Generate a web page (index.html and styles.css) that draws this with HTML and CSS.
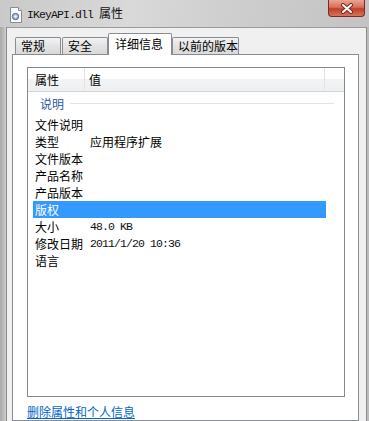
FILE: index.html
```html
<!DOCTYPE HTML>
<html>
<head>
    <meta charset="utf-8">
    <title>IKeyAPI.dll 属性</title>
    <link rel="stylesheet" href="styles.css">
</head>

<body>
    <div class='window'>
        <div class='titlebar'>
            <svg class='file-icon' width="14" height="16" viewBox="0 0 14 16">
                <path d="M1.5 0.5h8l3 3v12h-11z" fill="#fdfdfd" stroke="#8c8c8c"/>
                <path d="M9.5 0.5v3h3" fill="#e6e6e6" stroke="#8c8c8c"/>
                <circle cx="6.5" cy="9.5" r="3.2" fill="#9db4cf" stroke="#56708f"/>
                <circle cx="6.5" cy="9.5" r="1.2" fill="#fdfdfd"/>
            </svg>
            <span class='title'>IKeyAPI.dll <span class='cjk'>属性</span></span>
            <div class='close'>
                <svg width="14" height="11" viewBox="0 0 14 11">
                    <path d="M3 2l8 7M11 2l-8 7" stroke="#7a2a1e" stroke-width="4" stroke-linecap="round"/>
                    <path d="M3 2l8 7M11 2l-8 7" stroke="#ffffff" stroke-width="2" stroke-linecap="round"/>
                </svg>
            </div>
        </div>
        <div class='client'>
            <div class='tabs'>
                <div class='tab'>常规</div>
                <div class='tab'>安全</div>
                <div class='tab active'>详细信息</div>
                <div class='tab'>以前的版本</div>
            </div>
            <div class='panel'>
                <div class='list'>
                    <div class='list-head'>
                        <div class='col-name'>属性</div>
                        <div class='col-value'>值</div>
                        <div class='col-rest'></div>
                    </div>
                    <div class='group'>
                        <span>说明</span>
                        <i class='rule'></i>
                    </div>
                    <div class='row'><span class='name'>文件说明</span><span class='value'></span></div>
                    <div class='row'><span class='name'>类型</span><span class='value'>应用程序扩展</span></div>
                    <div class='row'><span class='name'>文件版本</span><span class='value'></span></div>
                    <div class='row'><span class='name'>产品名称</span><span class='value'></span></div>
                    <div class='row'><span class='name'>产品版本</span><span class='value'></span></div>
                    <div class='row selected'><span class='name'>版权</span><span class='value'></span></div>
                    <div class='row'><span class='name'>大小</span><span class='value mono'>48.0 KB</span></div>
                    <div class='row'><span class='name'>修改日期</span><span class='value mono'>2011/1/20 10:36</span></div>
                    <div class='row'><span class='name'>语言</span><span class='value'></span></div>
                </div>
                <a class='link' href="#">删除属性和个人信息</a>
            </div>
        </div>
    </div>
</body>
</html>
```

FILE: styles.css
```css
html, body{
    margin: 0;
    padding: 0;
    width: 369px;
    height: 421px;
    overflow: hidden;
}
body{
    font-family: "Noto Sans CJK SC", "Liberation Sans", sans-serif;
    font-size: 12px;
    color: #000;
}
.window{
    width: 369px;
    height: 421px;
    display: flex;
    flex-direction: column;
    background: linear-gradient(to right, #a9a9a9 0px, #bdbdbd 4px, #d2d2d2 6px, #c8c8c8 50%, #bcbcbc);
}
.titlebar{
    height: 27px;
    display: flex;
    align-items: flex-start;
    background: linear-gradient(100deg, #c9c9c9 0%, #d9d9d9 35%, #cfcfcf 60%, #c3c3c3 100%);
}
.file-icon{
    margin: 7px 0 0 9px;
}
.title{
    margin: 6px 0 0 4px;
    font-family: "Liberation Mono", monospace;
    font-size: 11.5px;
    letter-spacing: -0.9px;
    line-height: 14px;
    color: #111;
}
.title .cjk{
    font-family: "Noto Sans CJK SC", sans-serif;
    font-size: 12px;
    letter-spacing: 0;
}
.close{
    margin-left: auto;
    margin-right: 4px;
    width: 37px;
    height: 17px;
    box-sizing: border-box;
    border: 1px solid #7d2a20;
    border-top: none;
    border-radius: 0 0 4px 4px;
    background: linear-gradient(#e8a593 0%, #d8705a 45%, #c23e27 55%, #d5735d 100%);
    display: flex;
    align-items: center;
    justify-content: center;
}
.client{
    flex: 1;
    margin: 0 2px 0 6px;
    border-left: 1px solid #8a8a8a;
    border-top: 1px solid #9a9a9a;
    border-right: 1px solid #8a8a8a;
    background-color: #f0f0f0;
    padding: 0 7px 0 5px;
    display: flex;
    flex-direction: column;
}
.tabs{
    display: flex;
    align-items: flex-end;
    height: 21px;
    padding: 5px 0 0 3px;
}
.tab{
    height: 17px;
    box-sizing: border-box;
    min-width: 46px;
    padding: 0 0 0 5px;
    margin-right: 1px;
    border: 1px solid #898c95;
    border-bottom: none;
    border-radius: 2px 2px 0 0;
    background: linear-gradient(#f3f3f3, #e3e3e3 50%, #d9d9d9);
    line-height: 16px;
    white-space: nowrap;
}
.tab.active{
    height: 22px;
    margin: 0 0 -1px -1px;
    padding: 0 8px 0 6px;
    background: #ffffff;
    position: relative;
    line-height: 20px;
}
.panel{
    flex: 1;
    border: 1px solid #898c95;
    background-color: #ffffff;
    padding: 12px 13px 0 14px;
}
.list{
    height: 330px;
    box-sizing: border-box;
    border: 1px solid #828790;
}
.list-head{
    display: flex;
    height: 24px;
    box-sizing: border-box;
    border-bottom: 1px solid #d5d5d5;
    background: linear-gradient(#ffffff 0%, #ffffff 45%, #f2f3f5 50%, #eef0f2 100%);
    line-height: 23px;
}
.col-name{
    width: 57px;
    box-sizing: border-box;
    padding-left: 7px;
    border-right: 1px solid #e3e4e6;
}
.col-value{
    width: 240px;
    box-sizing: border-box;
    padding-left: 4px;
    border-right: 1px solid #e3e4e6;
}
.col-rest{
    flex: 1;
}
.group{
    display: flex;
    align-items: center;
    height: 17px;
    margin: 3px 0 4px 0;
    padding-left: 12px;
    color: #2a55a8;
}
.group .rule{
    flex: 1;
    height: 1px;
    margin: 0 10px 0 6px;
    background-color: #e2e2e2;
}
.row{
    display: flex;
    height: 17px;
    line-height: 17px;
    margin: 0 18px 0 5px;
}
.row .name{
    width: 57px;
    box-sizing: border-box;
    padding-left: 2px;
}
.row.selected{
    background-color: #3399ff;
    color: #ffffff;
}
.mono{
    font-family: "Liberation Mono", monospace;
    font-size: 11.5px;
    letter-spacing: -0.9px;
    color: #111;
}
.link{
    display: block;
    margin-top: 8px;
    color: #0066cc;
    text-decoration: underline;
    line-height: 14px;
    width: max-content;
}
```
